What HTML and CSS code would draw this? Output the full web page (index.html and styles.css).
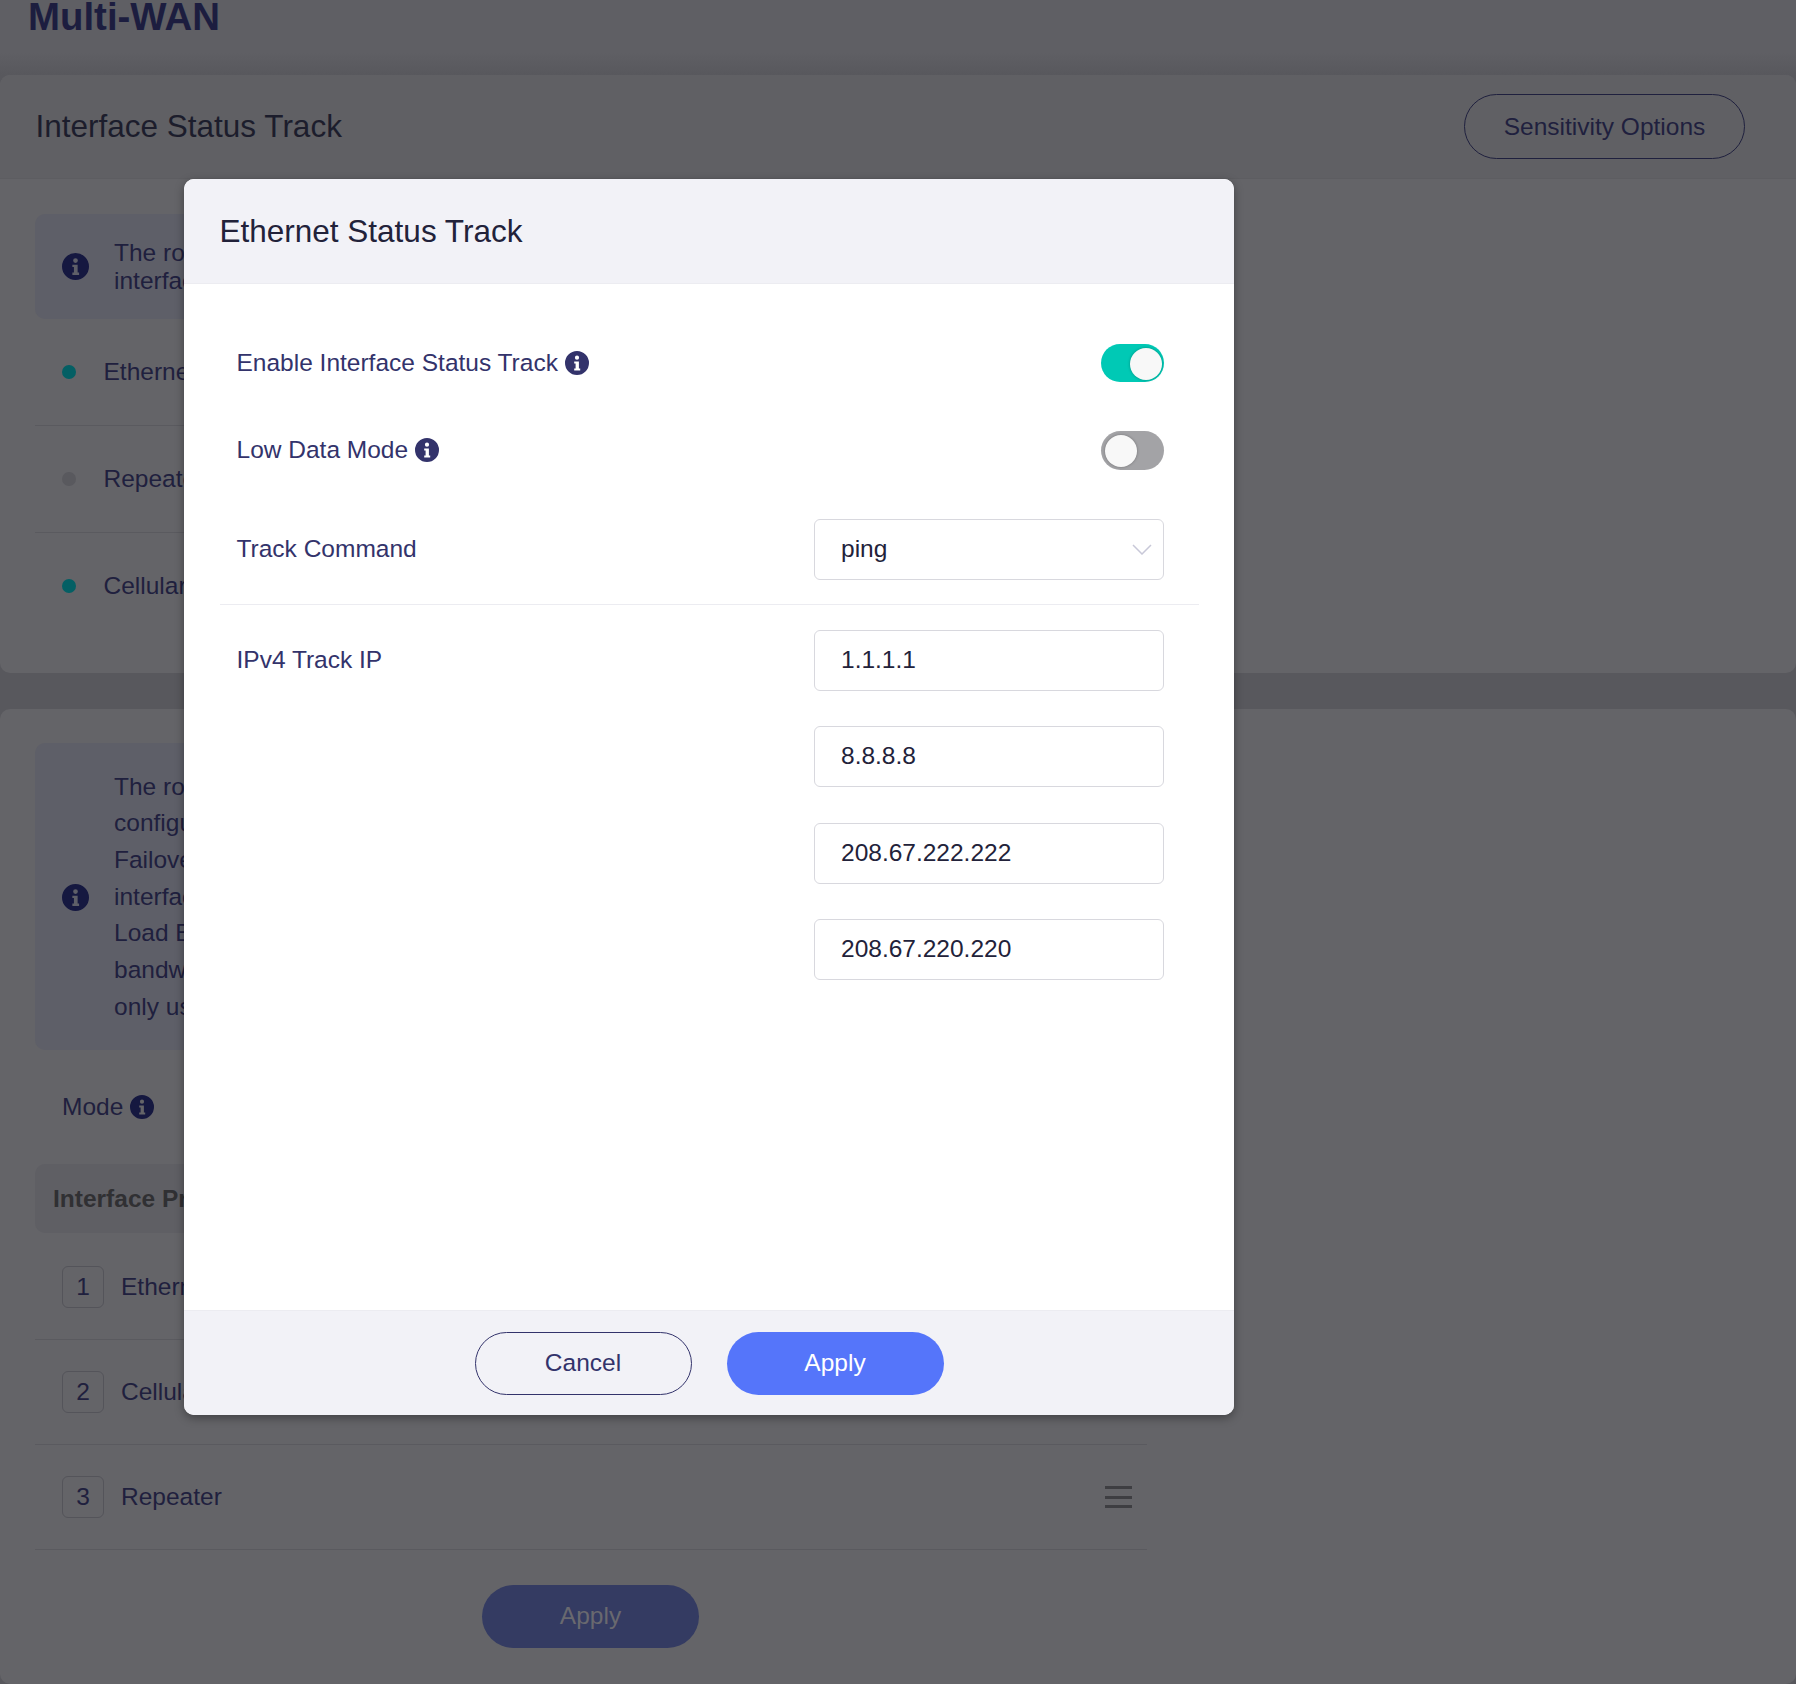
FILE: index.html
```html
<!DOCTYPE html>
<html lang="en">
<head>
    <meta charset="UTF-8">
    <meta name="viewport" content="width=device-width, initial-scale=1.0">
    <title>Multi-WAN</title>
    <link rel="stylesheet" href="styles.css">
</head>
<body>

    <svg class="sprite" aria-hidden="true">
        <symbol id="info" viewBox="0 0 24 24">
            <path fill-rule="evenodd" d="M12 0a12 12 0 1 0 0 24a12 12 0 0 0 0-24zM12 4.6a2.1 2.1 0 1 1 0 4.2a2.1 2.1 0 0 1 0-4.2zM9.2 10.4h4.7v7h1.3v2.1H9.200v-2.100h1.400v-4.900H9.200z"/>
        </symbol>
    </svg>

    <div class="page">
        <div class="top-bar">
            <h1>Multi-WAN</h1>
        </div>

        <section class="card status-card">
            <div class="card-head">
                <h2>Interface Status Track</h2>
                <button class="outline-button">Sensitivity Options</button>
            </div>
            <div class="card-body">
                <div class="notice short">
                    <svg class="notice-icon"><use href="#info"></use></svg>
                    <p>The router tracks each interface<br>interface status</p>
                </div>
                <div class="status-row"><span class="dot on"></span>Ethernet</div>
                <div class="status-row"><span class="dot"></span>Repeater</div>
                <div class="status-row last"><span class="dot on"></span>Cellular</div>
            </div>
        </section>

        <section class="card mode-card">
            <div class="notice tall">
                <svg class="notice-icon"><use href="#info"></use></svg>
                <p>The router mode<br>configuration<br>Failover<br>interface<br>Load Balance<br>bandwidth<br>only used</p>
            </div>
            <div class="mode-row">Mode<svg class="info-small"><use href="#info"></use></svg></div>
            <div class="priority-head">Interface Priority</div>
            <div class="priority-row"><span class="rank">1</span>Ethernet</div>
            <div class="priority-row"><span class="rank">2</span>Cellular</div>
            <div class="priority-row">
                <span class="rank">3</span>Repeater
                <span class="drag"><i></i><i></i><i></i></span>
            </div>
            <div class="page-actions">
                <button class="pill page-apply">Apply</button>
            </div>
        </section>
    </div>

    <div class="modal">
        <div class="modal-head">Ethernet Status Track</div>
        <div class="modal-body">
            <div class="field switch-field">
                <span class="label">Enable Interface Status Track <svg class="info-small"><use href="#info"></use></svg></span>
                <span class="switch on"><span class="thumb"></span></span>
            </div>
            <div class="field switch-field second">
                <span class="label">Low Data Mode <svg class="info-small"><use href="#info"></use></svg></span>
                <span class="switch"><span class="thumb"></span></span>
            </div>
            <div class="field select-field">
                <span class="label">Track Command</span>
                <div class="box select">
                    ping
                    <svg class="chevron" viewBox="0 0 20 11"><path d="M1 1l9 9l9-9"/></svg>
                </div>
            </div>
            <div class="ip-field">
                <span class="label">IPv4 Track IP</span>
                <div class="ip-list">
                    <input class="box" type="text" value="1.1.1.1">
                    <input class="box" type="text" value="8.8.8.8">
                    <input class="box" type="text" value="208.67.222.222">
                    <input class="box" type="text" value="208.67.220.220">
                </div>
            </div>
        </div>
        <div class="modal-foot">
            <button class="pill cancel">Cancel</button>
            <button class="pill apply">Apply</button>
        </div>
    </div>

</body>
</html>
```

FILE: styles.css
```css
html, body {
    margin: 0;
    padding: 0;
}
body {
    font-family: "Liberation Sans", Arial, sans-serif;
    font-size: 24.5px;
    background-color: #58585d;
    color: #1f203e;
    height: 1684px;
    overflow: hidden;
    position: relative;
}
button, input {
    font-family: inherit;
    font-size: inherit;
}
.sprite {
    display: none;
}
.top-bar {
    height: 75px;
    padding-left: 28px;
    background: linear-gradient(#5f5f64 70%, #58585d);
    overflow: hidden;
}
h1 {
    margin: 0;
    font-size: 38.4px;
    line-height: 34px;
    font-weight: bold;
    color: #1c1d3f;
}
.card {
    background: #646468;
    border-radius: 10px;
}
.card-head {
    height: 104px;
    box-sizing: border-box;
    display: flex;
    justify-content: space-between;
    align-items: center;
    padding: 0 51px 0 35.5px;
    background: #606064;
    border-bottom: 1px solid #5d5d61;
    border-radius: 10px 10px 0 0;
}
h2 {
    margin: 0;
    font-size: 31.5px;
    font-weight: normal;
    color: #1c1d2c;
}
.outline-button {
    width: 281px;
    height: 65px;
    background: none;
    border: 1.5px solid #1f203e;
    border-radius: 33px;
    color: #1f203e;
    padding: 0;
}
.status-card {
    height: 598px;
    margin-bottom: 36px;
}
.card-body {
    padding: 35px 649px 0 35px;
}
.notice {
    display: flex;
    align-items: center;
    padding-left: 27px;
    background: #5e5f68;
    border-radius: 10px;
}
.notice p {
    margin: 0 0 0 25px;
    padding-top: 1px;
    white-space: nowrap;
}
.notice-icon {
    width: 27px;
    height: 27px;
    fill: #151840;
    flex: none;
}
.notice.short {
    height: 105px;
    line-height: 28.5px;
}
.notice.tall {
    height: 307px;
    line-height: 36.7px;
}
.notice.tall .notice-icon {
    margin-top: 1px;
}
.status-row {
    height: 106px;
    display: flex;
    align-items: center;
    padding-left: 27px;
    border-bottom: 1px solid #5a5a5f;
}
.status-row.last {
    border-bottom: none;
}
.dot {
    width: 14px;
    height: 14px;
    border-radius: 50%;
    background: #59595e;
    margin-right: 27.500px;
}
.dot.on {
    background: #045f64;
}
.mode-card {
    height: 975px;
    padding: 34px 649px 0 35px;
    box-sizing: border-box;
}
.mode-row {
    height: 114px;
    display: flex;
    align-items: center;
    padding-left: 27px;
}
.info-small {
    width: 24px;
    height: 24px;
    fill: #151840;
    margin-left: 7px;
}
.priority-head {
    height: 69px;
    margin-bottom: 2px;
    display: flex;
    align-items: center;
    padding-left: 18px;
    background: #5f5f64;
    border-radius: 10px;
    font-weight: bold;
    color: #303033;
}
.priority-row {
    height: 104px;
    display: flex;
    align-items: center;
    padding-left: 27px;
    border-bottom: 1px solid #5a5a5f;
}
.rank {
    width: 40px;
    height: 40px;
    border: 1px solid #54545a;
    border-radius: 6px;
    display: flex;
    align-items: center;
    justify-content: center;
    margin-right: 17px;
}
.drag {
    width: 27px;
    margin-left: auto;
    margin-right: 15px;
}
.drag i {
    display: block;
    height: 3px;
    margin: 6.5px 0;
    background: #3e3e42;
}
.page-actions {
    display: flex;
    justify-content: center;
    padding: 35px 1px 0 0;
}
.pill {
    width: 217px;
    height: 63px;
    border-radius: 32px;
    padding: 0 0 1px;
}
.page-apply {
    background: #343b62;
    color: #69696f;
    border: none;
}

.modal {
    position: absolute;
    left: 184px;
    top: 179px;
    width: 1050px;
    height: 1236px;
    display: flex;
    flex-direction: column;
    background: #fff;
    border-radius: 10px;
    box-shadow: 0 3px 10px rgba(0,0,0,0.35);
    overflow: hidden;
}
.modal-head {
    height: 105px;
    flex: none;
    box-sizing: border-box;
    display: flex;
    align-items: center;
    padding-left: 35.5px;
    background: #f2f2f7;
    border-bottom: 1px solid #ececf1;
    font-size: 31.5px;
    color: #22223a;
}
.modal-body {
    flex: 1;
    padding: 60px 35px 0 36px;
}
.field {
    display: flex;
    justify-content: space-between;
    align-items: center;
    padding: 0 35px 0 16.5px;
}
.label {
    color: #33336b;
    display: flex;
    align-items: center;
    padding-bottom: 1px;
}
.label .info-small {
    fill: #33336b;
    margin-left: 7px;
}
.switch-field {
    height: 38px;
}
.switch-field.second {
    height: 39px;
    margin-top: 49px;
}
.switch {
    width: 63px;
    height: 100%;
    box-sizing: border-box;
    padding: 3.5px;
    border-radius: 20px;
    background: #a3a3a6;
    display: flex;
}
.switch.on {
    background: #00c9b5;
    justify-content: flex-end;
    padding-right: 2.500px;
}
.thumb {
    width: 32px;
    height: 32px;
    border-radius: 50%;
    background: #f8f8f8;
    box-shadow: 0 0 3px rgba(0,0,0,0.3);
}
.select-field {
    margin-top: 49px;
    padding-bottom: 24px;
    border-bottom: 1px solid #ececf1;
}
.box {
    width: 350px;
    height: 61px;
    box-sizing: border-box;
    padding: 0 26px 1px;
    background: #fff;
    border: 1px solid #d8d8de;
    border-radius: 6px;
    color: #22223a;
    font-size: 24.5px;
}
.select {
    display: flex;
    align-items: center;
    justify-content: space-between;
    padding-right: 11px;
}
.chevron {
    width: 20px;
    height: 11px;
    fill: none;
    stroke: #c8c8d8;
    stroke-width: 1.5;
}
.ip-field {
    display: flex;
    justify-content: space-between;
    padding: 25px 35px 0 16.5px;
}
.ip-field .label {
    height: 60px;
    padding-bottom: 0;
}
.ip-list {
    display: flex;
    flex-direction: column;
    gap: 35.3px;
}
.modal-foot {
    height: 105px;
    flex: none;
    box-sizing: border-box;
    display: flex;
    justify-content: center;
    align-items: center;
    gap: 35px;
    background: #f2f2f7;
    border-top: 1px solid #ececf1;
}
.cancel {
    background: none;
    border: 1.5px solid #33336b;
    color: #33336b;
}
.apply {
    background: #5575fa;
    border: none;
    color: #fff;
}
```
